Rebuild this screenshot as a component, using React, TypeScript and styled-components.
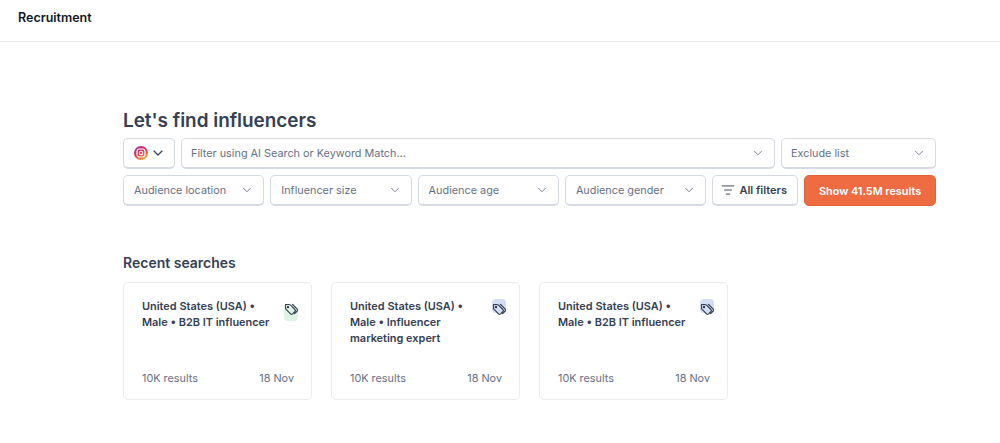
import styled, { createGlobalStyle } from "styled-components";
import { ChevronDown, ListFilter } from "lucide-react";

const GlobalStyle = createGlobalStyle`
  * {
    box-sizing: border-box;
  }
  body {
    margin: 0;
    background: #ffffff;
    font-family: Inter, "Liberation Sans", sans-serif;
    overflow: hidden;
  }
`;

const TopBar = styled.header`
  height: 42px;
  display: flex;
  align-items: center;
  padding: 0 18px 5px;
  border-bottom: 1px solid #e9eaec;
`;

const PageName = styled.h1`
  margin: 0;
  font-size: 12.5px;
  line-height: 20px;
  font-weight: 600;
  color: #101828;
`;

const Main = styled.main`
  width: 813px;
  margin-left: 123px;
  padding-top: 67px;
`;

const Title = styled.h2`
  margin: 0 0 6px;
  font-size: 18.9px;
  line-height: 23px;
  font-weight: 600;
  color: #344054;
`;

const FilterRow = styled.div`
  display: flex;
  gap: 6px;
  margin-bottom: 6px;
`;

const Control = styled.button<{ $width?: number; $grow?: boolean }>`
  height: 31px;
  width: ${(p) => (p.$width ? `${p.$width}px` : "auto")};
  flex: ${(p) => (p.$grow ? "1 1 0" : "0 0 auto")};
  display: flex;
  align-items: center;
  justify-content: space-between;
  padding: 0 9px 0 9px;
  background: #ffffff;
  border: 1px solid #d6dae2;
  border-bottom-width: 2px;
  border-radius: 5px;
  font-family: inherit;
  font-size: 10.85px;
  font-weight: 400;
  color: #667085;
`;

const LowerControl = styled(Control)`
  padding-left: 10px;
`;

const PlatformControl = styled(Control)`
  padding: 0 8px 0 10px;
`;

const FiltersButton = styled(Control)`
  justify-content: center;
  gap: 4px;
  padding: 0 2px 0 0;
  font-size: 11px;
  font-weight: 600;
  color: #344054;
`;

const ShowButton = styled.button`
  flex: 1;
  height: 31px;
  background: #ef6c42;
  border: 1px solid #e56338;
  border-radius: 5px;
  font-family: inherit;
  font-size: 10.85px;
  font-weight: 600;
  color: #ffffff;
`;

const SectionTitle = styled.h3`
  margin: 48px 0 11px;
  font-size: 14px;
  line-height: 17px;
  font-weight: 600;
  color: #344054;
`;

const Cards = styled.div`
  display: flex;
  gap: 19px;
`;

const Card = styled.article`
  width: 189px;
  height: 118px;
  display: flex;
  flex-direction: column;
  justify-content: space-between;
  padding: 15px 17px 13px 18px;
  border: 1px solid #eaecf0;
  border-radius: 5px;
  background: #ffffff;
`;

const CardTop = styled.div`
  display: flex;
  justify-content: space-between;
  align-items: flex-start;
  gap: 8px;
`;

const CardTitle = styled.p`
  margin: 0;
  font-size: 10.95px;
  line-height: 16px;
  font-weight: 600;
  color: #344054;
`;

const TagBadge = styled.span<{ $tint: string; $shift: number }>`
  position: relative;
  flex: 0 0 14px;
  width: 14px;
  height: 13px;
  margin: 5px -4px 0 0;
  display: block;
  color: #344054;
  &::before {
    content: "";
    position: absolute;
    left: 0;
    top: ${(p) => p.$shift}px;
    width: 14px;
    height: 14px;
    border-radius: 4px;
    background: ${(p) => p.$tint};
  }
  svg {
    position: relative;
    display: block;
  }
`;

const CardFooter = styled.div`
  display: flex;
  justify-content: space-between;
  font-size: 10.85px;
  line-height: 16px;
  color: #667085;
`;

function InstagramIcon() {
  return (
    <svg width="14" height="14" viewBox="0 0 14 14">
      <defs>
        <linearGradient id="ig" x1="0.1" y1="0" x2="0.7" y2="1">
          <stop offset="0" stopColor="#a62fb5" />
          <stop offset="0.5" stopColor="#e9304f" />
          <stop offset="1" stopColor="#f9a72b" />
        </linearGradient>
      </defs>
      <circle cx="7" cy="7" r="7" fill="url(#ig)" />
      <rect x="3" y="3" width="8" height="8" rx="2.6" fill="none" stroke="#fff" strokeWidth="1.2" />
      <circle cx="7" cy="7" r="1.7" fill="none" stroke="#fff" strokeWidth="1.1" />
    </svg>
  );
}

function TagIcon() {
  return (
    <svg width="15" height="14" viewBox="0 0 15 14" fill="none" stroke="currentColor" strokeWidth="1.2" strokeLinejoin="round" strokeLinecap="round">
      <path d="M1.5 1.5V5q0 .8.6 1.4L6.6 10.9q1 .9 2 0l2.4-2.4q.8-.9 0-1.8L6.6 2.2Q5.9 1.5 5 1.5Z" />
      <circle cx="4" cy="4" r=".6" />
      <path d="M8.6 1.5l4.6 4.7q.8.9 0 1.8l-2.6 2.7" />
    </svg>
  );
}

const chevron = <ChevronDown size={14} strokeWidth={1.5} color="#667085" />;

const filters = ["Audience location", "Influencer size", "Audience age", "Audience gender"];

const searches = [
  { title: "United States (USA) • Male • B2B IT influencer", tint: "#dff3e5", shift: 4 },
  { title: "United States (USA) • Male • Influencer marketing expert", tint: "#d5dcf6", shift: -4 },
  { title: "United States (USA) • Male • B2B IT influencer", tint: "#d5dcf6", shift: -4 },
];

export default function App() {
  return (
    <>
      <GlobalStyle />
      <TopBar>
        <PageName>Recruitment</PageName>
      </TopBar>
      <Main>
        <Title>Let's find influencers</Title>
        <FilterRow>
          <PlatformControl $width={52}>
            <InstagramIcon />
            <ChevronDown size={16} strokeWidth={1.8} color="#344054" />
          </PlatformControl>
          <Control $grow>
            Filter using AI Search or Keyword Match...
            {chevron}
          </Control>
          <Control $width={155}>
            Exclude list
            {chevron}
          </Control>
        </FilterRow>
        <FilterRow>
          {filters.map((label) => (
            <LowerControl key={label} $width={141.3}>
              {label}
              {chevron}
            </LowerControl>
          ))}
          <FiltersButton $width={86}>
            <ListFilter size={14} strokeWidth={1.6} />
            All filters
          </FiltersButton>
          <ShowButton>Show 41.5M results</ShowButton>
        </FilterRow>
        <SectionTitle>Recent searches</SectionTitle>
        <Cards>
          {searches.map((s, i) => (
            <Card key={i}>
              <CardTop>
                <CardTitle>{s.title}</CardTitle>
                <TagBadge $tint={s.tint} $shift={s.shift}>
                  <TagIcon />
                </TagBadge>
              </CardTop>
              <CardFooter>
                <span>10K results</span>
                <span>18 Nov</span>
              </CardFooter>
            </Card>
          ))}
        </Cards>
      </Main>
    </>
  );
}
